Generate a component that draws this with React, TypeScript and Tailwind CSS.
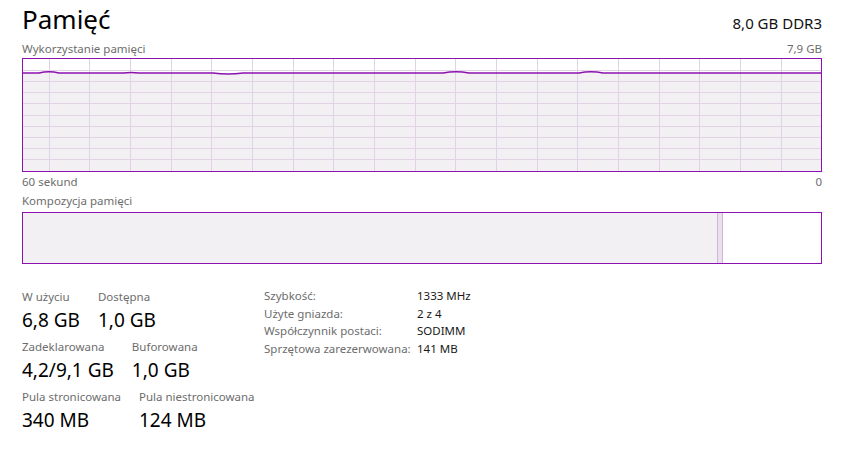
import React from "react";

const W = 798;
const H = 112;

function UsageGraph() {
  const cols = Array.from({ length: 19 }, (_, i) => 26 + i * 40.67);
  const rows = Array.from({ length: 9 }, (_, i) => 11.2 * (i + 1));
  const line =
    "M0 14 L16 14 Q26 11.5 36 14 L100 14 Q108 13 116 14 L190 14 Q205 16 220 14 L420 14 Q433 11.5 446 14 L556 14 Q568 11.5 580 14 L798 14";
  return (
    <div className="border border-[#8b12ae] h-[114px] bg-white">
      <svg width={W} height={H} viewBox={`0 0 ${W} ${H}`} className="block">
        <path d={`${line} L798 112 L0 112 Z`} fill="#f3f0f4" />
        {cols.map((x) => (
          <line key={x} x1={x} y1={0} x2={x} y2={H} stroke="#e1d3e5" strokeWidth={1} shapeRendering="crispEdges" />
        ))}
        {rows.map((y) => (
          <line key={y} x1={0} y1={y} x2={W} y2={y} stroke="#e1d3e5" strokeWidth={1} shapeRendering="crispEdges" />
        ))}
        <path d={line} fill="none" stroke="#8b12ae" strokeWidth={1.5} />
      </svg>
    </div>
  );
}

function Stat({ label, value }: { label: string; value: string }) {
  return (
    <div className="flex flex-col">
      <span className="text-[11.5px] leading-[15px] text-[#6d6d6d]">{label}</span>
      <span className="text-[19px] leading-[26px] text-black mt-[3px]">{value}</span>
    </div>
  );
}

const details = [
  ["Szybkość:", "1333 MHz"],
  ["Użyte gniazda:", "2 z 4"],
  ["Współczynnik postaci:", "SODIMM"],
  ["Sprzętowa zarezerwowana:", "141 MB"],
];

export default function App() {
  return (
    <div className="w-[841px] h-[464px] bg-white px-[22px] overflow-hidden" style={{ fontFamily: '"Noto Sans", sans-serif' }}>
      <div className="w-[800px] flex items-end justify-between">
        <span className="text-[26px] leading-[38px] text-black">Pamięć</span>
        <span className="text-[15px] leading-[22px] text-[#111] mb-[4px]">8,0 GB DDR3</span>
      </div>

      <div className="w-[800px] flex justify-between text-[11.5px] leading-[16px] text-[#6d6d6d] mt-[3px]">
        <span>Wykorzystanie pamięci</span>
        <span>7,9 GB</span>
      </div>
      <div className="w-[800px] mt-[1px]">
        <UsageGraph />
      </div>
      <div className="w-[800px] flex justify-between text-[11.5px] leading-[16px] text-[#6d6d6d] mt-[2px]">
        <span>60 sekund</span>
        <span>0</span>
      </div>

      <div className="text-[11.5px] leading-[16px] text-[#6d6d6d] mt-[3px]">Kompozycja pamięci</div>
      <div className="w-[800px] h-[52px] border border-[#8b12ae] flex mt-[3px] bg-white">
        <div className="w-[694px] bg-[#f3f0f4]" />
        <div className="w-[6px] bg-[#ecdff0] border-x border-[#cfb6d8]" />
        <div className="flex-1 bg-white" />
      </div>

      <div className="flex mt-[25px]">
        <div className="flex flex-col gap-[6px] w-[242px]">
          <div className="flex gap-[18px]">
            <Stat label="W użyciu" value="6,8 GB" />
            <Stat label="Dostępna" value="1,0 GB" />
          </div>
          <div className="flex gap-[18px]">
            <Stat label="Zadeklarowana" value="4,2/9,1 GB" />
            <Stat label="Buforowana" value="1,0 GB" />
          </div>
          <div className="flex gap-[18px]">
            <Stat label="Pula stronicowana" value="340 MB" />
            <Stat label="Pula niestronicowana" value="124 MB" />
          </div>
        </div>
        <div className="grid grid-cols-[153px_auto] content-start text-[11.5px] leading-[17.5px] -mt-[2px]">
          {details.map(([k, v]) => (
            <React.Fragment key={k}>
              <span className="text-[#6d6d6d]">{k}</span>
              <span className="text-[#1a1a1a]">{v}</span>
            </React.Fragment>
          ))}
        </div>
      </div>
    </div>
  );
}
